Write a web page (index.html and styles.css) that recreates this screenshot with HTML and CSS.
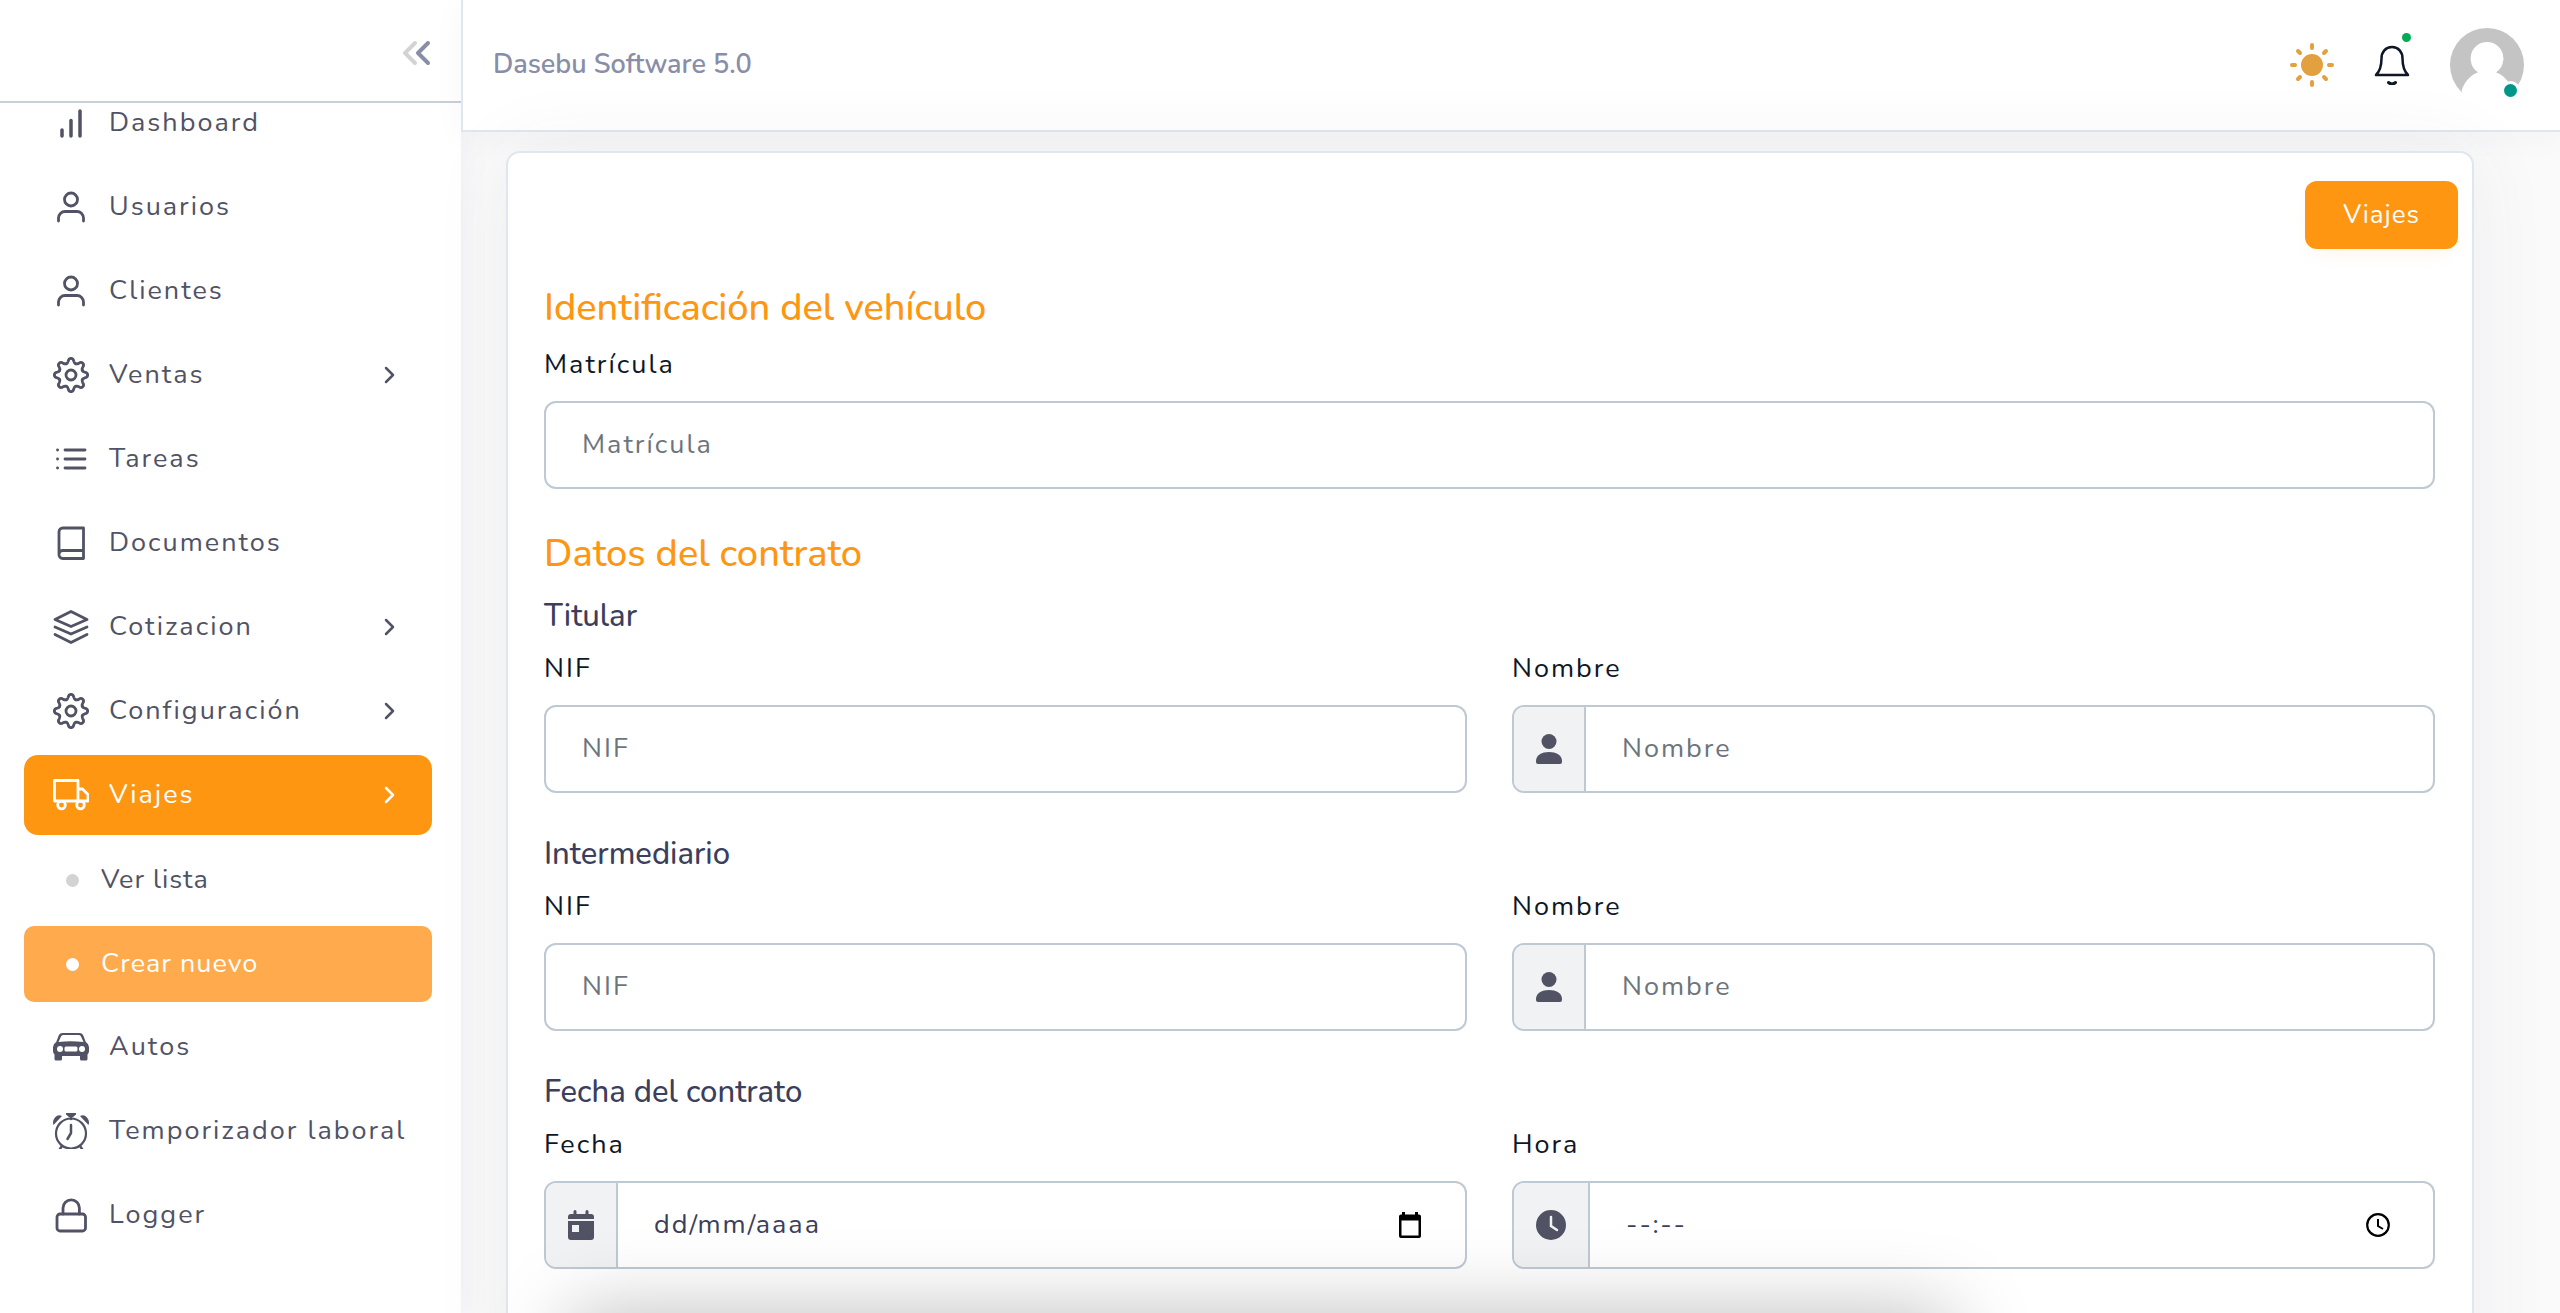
FILE: index.html
```html
<!DOCTYPE html>
<html lang="es">
<head>
<meta charset="utf-8">
<meta name="viewport" content="width=device-width, initial-scale=1">
<title>Dasebu Software 5.0</title>
<link rel="stylesheet" href="styles.css">
</head>
<body>
<svg class="sprite" aria-hidden="true">
  <symbol id="i-gear" viewBox="-18 -18 36 36">
    <path id="tooth" d="M-4.7-11.3C-3.6-11.8-3.1-12.5-2.8-13.8C-2.2-17.6 2.2-17.6 2.8-13.8C3.1-12.5 3.6-11.8 4.7-11.3"/>
    <use href="#tooth" transform="rotate(45)"/><use href="#tooth" transform="rotate(90)"/><use href="#tooth" transform="rotate(135)"/><use href="#tooth" transform="rotate(180)"/><use href="#tooth" transform="rotate(225)"/><use href="#tooth" transform="rotate(270)"/><use href="#tooth" transform="rotate(315)"/>
    <circle r="5"/>
  </symbol>
  <symbol id="i-user" viewBox="0 0 36 36"><path d="M30.500 32v-3a6.500 6.500 0 0 0-6.500-6.500H12A6.500 6.500 0 0 0 5.500 29v3"/><circle cx="18" cy="10.500" r="6.500"/></symbol>
  <symbol id="i-chevron" viewBox="0 0 12 20"><path d="M2 3l7 7-7 7"/></symbol>
  <symbol id="i-person" viewBox="0 0 26 30"><circle cx="13" cy="7.500" r="7.500"/><path d="M0 28v-1C0 21 6 18 13 18s13 3 13 9v1q0 2-2 2H2q-2 0-2-2z"/></symbol>
</svg>
<div class="app">
  <aside class="sidebar">
    <div class="sidebar-head">
      <button class="collapse" type="button" aria-label="Contraer menú">
        <svg width="30" height="26" viewBox="0 0 30 26"><path class="back" d="M13 3L3 13l10 10"/><path d="M26 3L16 13l10 10"/></svg>
      </button>
    </div>
    <nav>
      <ul class="menu">
        <li><a class="item" href="#"><svg class="icon" viewBox="0 0 36 36"><path d="M9 31v-6M18 31V15.500M27 31V6" stroke-width="3.500"/></svg>Dashboard</a></li>
        <li><a class="item" href="#"><svg class="icon"><use href="#i-user"/></svg>Usuarios</a></li>
        <li><a class="item" href="#"><svg class="icon"><use href="#i-user"/></svg>Clientes</a></li>
        <li><a class="item" href="#"><svg class="icon"><use href="#i-gear"/></svg>Ventas<svg class="chevron"><use href="#i-chevron"/></svg></a></li>
        <li><a class="item" href="#"><svg class="icon" viewBox="0 0 36 36"><path d="M12 9h20M12 18h20M12 27h20M4.500 9h.1M4.500 18h.1M4.500 27h.1"/></svg>Tareas</a></li>
        <li><a class="item" href="#"><svg class="icon" viewBox="0 0 36 36"><path d="M6 29.200A3.800 3.800 0 0 1 9.800 25.500H30.500M9.800 3H30.500v30.500H9.800A3.800 3.800 0 0 1 6 29.200V6.800A3.800 3.800 0 0 1 9.800 3z"/></svg>Documentos</a></li>
        <li><a class="item" href="#"><svg class="icon" viewBox="0 0 36 36"><path d="M18 2.500L34 10.500 18 17.500 2 10.500zM2 18l16 7 16-7M2 25.500l16 8 16-8"/></svg>Cotizacion<svg class="chevron"><use href="#i-chevron"/></svg></a></li>
        <li><a class="item" href="#"><svg class="icon"><use href="#i-gear"/></svg>Configuración<svg class="chevron"><use href="#i-chevron"/></svg></a></li>
        <li>
          <a class="item active" href="#"><svg class="icon" viewBox="0 0 36 36"><path d="M1.500 3.500h23.500v20.500H1.500zM25 12h4.500l5.500 5.500v6.500H25z"/><circle cx="8.500" cy="28" r="3.800"/><circle cx="27.500" cy="28" r="3.800"/></svg>Viajes<svg class="chevron"><use href="#i-chevron"/></svg></a>
          <ul class="submenu">
            <li><a class="subitem" href="#">Ver lista</a></li>
            <li><a class="subitem current" href="#">Crear nuevo</a></li>
          </ul>
        </li>
        <li><a class="item" href="#"><svg class="icon solid" viewBox="0 0 36 36"><path fill-rule="evenodd" d="M9.500 4h17q3 0 4 3l2.300 6q3.200 2 3.200 5v4q0 2.500-1.500 3.500V30q0 1.500-1.500 1.500h-4.500Q27 31.500 27 30v-3H9v3q0 1.500-1.500 1.500H3Q1.500 31.500 1.500 30v-4.500Q0 24.500 0 22v-4q0-3 3.200-5L5.500 7q1-3 4-3zM10 6Q8.500 6 8 7.500L5.500 13q12.500-1.500 25 0L28 7.500Q27.500 6 26 6zM7 17a3 3 0 1 0 0 6a3 3 0 0 0 0-6zM29 17a3 3 0 1 0 0 6a3 3 0 0 0 0-6zM13 17.500q-1.500 0-1.500 1.500v2q0 1.500 1.500 1.500h10q1.500 0 1.500-1.500v-2q0-1.500-1.500-1.500z"/></svg>Autos</a></li>
        <li><a class="item" href="#"><svg class="icon" viewBox="0 0 36 36"><circle cx="18" cy="20.500" r="15" stroke-width="2.200"/><path d="M18 12v8l-3.500 6M9 33l-2 3M27 33l2 3M18 2v4" stroke-width="2.500"/><path class="solid" d="M13 0h10v1.500L20 4h-4l-3-2.500zM9 3Q5 1 2 4.500t-1.500 7.500zM27 3Q31 1 34 4.500t1.500 7.500z"/></svg>Temporizador laboral</a></li>
        <li><a class="item" href="#"><svg class="icon" viewBox="0 0 36 36"><rect x="4" y="17" width="28.500" height="17" rx="3"/><path d="M10 17v-6a8.200 8.200 0 0 1 16.400 0v6"/></svg>Logger</a></li>
      </ul>
    </nav>
  </aside>
  <div class="page">
    <header class="topbar">
      <span class="brand">Dasebu Software 5.0</span>
      <div class="tools">
        <button class="tool" type="button" aria-label="Tema">
          <svg width="44" height="44" viewBox="0 0 44 44"><circle cx="22" cy="22" r="11" fill="#e2a03f"/><path stroke="#e2a03f" stroke-width="4" stroke-linecap="round" d="M22 2v3M22 39v3M2 22h3M39 22h3M8 8l2 2M34 34l2 2M8 36l2-2M34 10l2-2"/></svg>
        </button>
        <button class="tool" type="button" aria-label="Notificaciones">
          <svg width="36" height="40" viewBox="0 0 36 40" fill="none" stroke="#0e1726" stroke-width="2.500" stroke-linecap="round" stroke-linejoin="round"><path d="M18 2C11.500 2 7.500 7 7.500 13.500C7.500 22 5 27 2 30h32C31 27 28.500 22 28.500 13.500C28.500 7 24.500 2 18 2z"/><path d="M14.500 37.500q3.500 3 7 0" stroke-width="3"/></svg>
          <span class="dot green"></span>
        </button>
        <button class="tool" type="button" aria-label="Perfil">
          <svg width="74" height="74" viewBox="0 0 74 74"><circle cx="37" cy="37" r="37" fill="#c4c4c4"/><path fill="#fff" d="M37 14a16.500 16.500 0 0 0-9 30.300C19 48 14 55 11.500 63L18 74h56V56L61 60C59 53 53 47 46 44.300A16.500 16.500 0 0 0 37 14z"/></svg>
          <span class="dot teal"></span>
        </button>
      </div>
    </header>
    <main class="content">
      <section class="card">
        <div class="actions"><button class="primary" type="button">Viajes</button></div>
        <form class="form">
          <h4>Identificación del vehículo</h4>
          <div class="row">
            <div class="field"><label for="plate">Matrícula</label><div class="control"><input id="plate" type="text" placeholder="Matrícula"></div></div>
          </div>
          <h4>Datos del contrato</h4>
          <h5>Titular</h5>
          <div class="row">
            <div class="field"><label for="nif1">NIF</label><div class="control"><input id="nif1" type="text" placeholder="NIF"></div></div>
            <div class="field"><label for="name1">Nombre</label><div class="control"><span class="addon"><svg width="26" height="30"><use href="#i-person"/></svg></span><input id="name1" type="text" placeholder="Nombre"></div></div>
          </div>
          <h5>Intermediario</h5>
          <div class="row">
            <div class="field"><label for="nif2">NIF</label><div class="control"><input id="nif2" type="text" placeholder="NIF"></div></div>
            <div class="field"><label for="name2">Nombre</label><div class="control"><span class="addon"><svg width="26" height="30"><use href="#i-person"/></svg></span><input id="name2" type="text" placeholder="Nombre"></div></div>
          </div>
          <h5>Fecha del contrato</h5>
          <div class="row">
            <div class="field"><label for="date">Fecha</label><div class="control"><span class="addon"><svg width="26" height="30" viewBox="0 0 26 30"><path d="M0 9V7q0-3 3-3h2.500V1.500q0-1.500 1.500-1.500t1.500 1.500V4h9V1.500Q17.500 0 19 0t1.500 1.500V4H23q3 0 3 3v2z"/><path fill-rule="evenodd" d="M0 11h26v16q0 3-3 3H3q-3 0-3-3zM4 15v7h7v-7z"/></svg></span><input id="date" class="picker" type="text" placeholder="dd/mm/aaaa"><button class="open" type="button" aria-label="Abrir calendario"><svg width="24" height="26" viewBox="0 0 24 26"><path fill-rule="evenodd" d="M4 0h3v2.500h10V0h3v2.500h1q2 0 2 2V24q0 2-2 2H3q-2 0-2-2V4.500q0-2 2-2h1zM3.500 8.500V23.500h17V8.500z"/></svg></button></div></div>
            <div class="field"><label for="time">Hora</label><div class="control"><span class="addon"><svg width="30" height="30" viewBox="0 0 30 30"><circle cx="15" cy="15" r="15"/><path d="M15 7v9l6 4" fill="none" stroke="#f1f2f3" stroke-width="2.500" stroke-linecap="round"/></svg></span><input id="time" class="picker" type="text" placeholder="--:--"><button class="open" type="button" aria-label="Abrir reloj"><svg width="24" height="24" viewBox="0 0 24 24" fill="none" stroke="#000"><circle cx="12" cy="12" r="10.800" stroke-width="2.200"/><path d="M12 6v7l5 3" stroke-width="2"/></svg></button></div></div>
          </div>
        </form>
      </section>
    </main>
  </div>
</div>
<div class="tray" aria-hidden="true"></div>
</body>
</html>
```
FILE: styles.css
```css
* { box-sizing: border-box; }
body {
  margin: 0;
  height: 100vh;
  overflow: hidden;
  background: #fafafa;
  color: #3b3f5c;
  font: 27px/36px Nunito, Lato, "Open Sans", sans-serif;
}
button { border: 0; padding: 0; background: none; font: inherit; cursor: pointer; }
ul { list-style: none; margin: 0; padding: 0; }
a { color: inherit; text-decoration: none; }
svg { display: block; flex: none; }
.sprite { position: absolute; width: 0; height: 0; }

.app { display: flex; height: 100vh; }

.sidebar {
  flex: none;
  width: 461px;
  background: #fff;
  color: #515365;
  box-shadow: 5px 0 25px rgba(94, 92, 154, .06);
}
.sidebar-head {
  display: flex;
  align-items: center;
  justify-content: flex-end;
  height: 103px;
  padding: 4px 29px 0 0;
  border-bottom: 2px solid #c8cfd9;
}
.collapse svg { fill: none; stroke: #888ea8; stroke-width: 4; stroke-linecap: round; stroke-linejoin: round; }
.collapse .back { stroke: #d3d3d3; }
.menu {
  display: flex;
  flex-direction: column;
  gap: 4px;
  margin-top: -20px;
  padding: 0 29px 0 24px;
}
.item {
  display: flex;
  align-items: center;
  gap: 20px;
  height: 80px;
  padding: 0 36px 0 29px;
  border-radius: 14px;
  letter-spacing: 2px;
  white-space: nowrap;
}
.icon {
  width: 36px;
  height: 36px;
  fill: none;
  stroke: currentColor;
  stroke-width: 2.8;
  stroke-linecap: round;
  stroke-linejoin: round;
}
.solid { fill: currentColor; stroke: none; }
.chevron {
  width: 12px;
  height: 20px;
  margin-left: auto;
  fill: none;
  stroke: currentColor;
  stroke-width: 2.5;
  stroke-linecap: round;
  stroke-linejoin: round;
}
.active { background: #ff9611; color: #fff; }
.submenu { display: flex; flex-direction: column; gap: 8px; padding: 7px 0 1px; }
.subitem {
  display: flex;
  align-items: center;
  gap: 22px;
  height: 76px;
  padding-left: 42px;
  border-radius: 10px;
  letter-spacing: 1px;
}
.subitem::before { content: ""; width: 13px; height: 13px; border-radius: 50%; background: #d3d3d3; }
.current { background: #ffaa4d; color: #fff; }
.current::before { background: #fff; }

.page { display: flex; flex: 1; flex-direction: column; min-width: 0; }
.topbar {
  display: flex;
  flex: none;
  align-items: center;
  justify-content: space-between;
  height: 132px;
  padding: 0 36px 0 30px;
  border: solid #e0e6ed;
  border-width: 0 0 2px 2px;
  background: #fff;
  box-shadow: 0 4px 30px rgba(60, 60, 90, .04);
}
.brand { color: #888ea8; font-weight: 600; }
.tools { display: flex; align-items: center; }
.tool { position: relative; margin-left: 40px; }
.dot { position: absolute; border-radius: 50%; }
.green { top: -12px; right: -1px; width: 9px; height: 9px; background: #00ab55; }
.teal { right: 7px; bottom: 5px; width: 13px; height: 13px; background: #009688; box-shadow: 0 0 0 3px #fff; }

.content { flex: 1; min-height: 0; padding: 19px 86px 0 45px; }
.card {
  padding: 28px 0 80px;
  border: 2px solid #e0e6ed;
  border-radius: 14px;
  background: #fff;
  box-shadow: 0 0 80px rgba(70, 70, 110, .07);
}
.actions { display: flex; justify-content: flex-end; padding-right: 14px; }
.primary {
  padding: 16px 38px;
  border-radius: 12px;
  background: #ff9611;
  color: #fff;
  font-size: 26px;
  letter-spacing: 1px;
  box-shadow: 0 10px 20px -10px rgba(255, 150, 17, .15);
}
.form { padding: 37px 37px 0 36px; }
h4, h5 { margin: 0; font-weight: 500; }
h4 { margin-bottom: 17px; color: #ff9611; font-size: 38px; line-height: 44px; }
h5 { margin-bottom: 17px; font-size: 31px; line-height: 36px; }
h4 + h5 { margin-top: 22px; }
.row { display: flex; gap: 45px; margin-bottom: 43px; }
.field { flex: 1; min-width: 0; }
label { display: block; margin-bottom: 18px; color: #0e1726; letter-spacing: 2px; }
.control {
  display: flex;
  align-items: stretch;
  height: 88px;
  border: 2px solid #bfc9d4;
  border-radius: 12px;
  overflow: hidden;
}
.addon {
  display: flex;
  align-items: center;
  padding: 0 22px;
  border-right: 2px solid #bfc9d4;
  background: #f1f2f3;
}
.addon svg { fill: #515365; }
input {
  flex: 1;
  min-width: 0;
  padding: 0 36px;
  border: 0;
  outline: 0;
  background: none;
  color: #3b3f5c;
  font: inherit;
  letter-spacing: 2px;
}
input::placeholder { color: #6c757d; opacity: 1; }
.picker::placeholder { color: #3b3f5c; }
.open { padding-right: 43px; }

.tray {
  position: fixed;
  top: 100%;
  left: 570px;
  width: 54%;
  height: 100px;
  box-shadow: 0 0 80px rgba(0, 0, 0, .26);
  pointer-events: none;
}
```
